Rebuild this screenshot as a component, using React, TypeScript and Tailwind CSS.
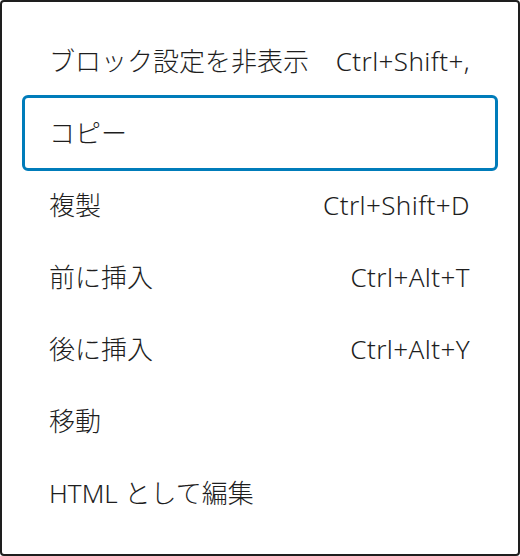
import React from 'react';

type Item = { label: string; shortcut?: string; focused?: boolean };

const items: Item[] = [
  { label: 'ブロック設定を非表示', shortcut: 'Ctrl+Shift+,' },
  { label: 'コピー', focused: true },
  { label: '複製', shortcut: 'Ctrl+Shift+D' },
  { label: '前に挿入', shortcut: 'Ctrl+Alt+T' },
  { label: '後に挿入', shortcut: 'Ctrl+Alt+Y' },
  { label: '移動' },
  { label: 'HTML として編集' },
];

export default function App() {
  return (
    <div
      className="w-[520px] h-[556px] bg-white"
      style={{ fontFamily: '"Noto Sans", "Noto Sans CJK JP", sans-serif' }}
    >
      <div className="h-full border-2 border-[#1e1e1e] rounded-[4px] pt-[23px] pb-[25px] px-[22px] flex flex-col text-[#1e1e1e] font-light">
        {items.map((item) => (
          <div
            key={item.label}
            className={
              item.focused
                ? 'h-[72px] shrink-0 flex items-center justify-between pl-[25px] pr-[26px] rounded-[4px] outline-[3px] outline-solid outline-[#007cba] -outline-offset-1'
                : 'h-[72px] shrink-0 flex items-center justify-between pl-[25px] pr-[26px]'
            }
          >
            <span className="text-[26px] leading-none whitespace-nowrap">{item.label}</span>
            {item.shortcut && (
              <span className="text-[26px] leading-none whitespace-nowrap tracking-[0.4px]">{item.shortcut}</span>
            )}
          </div>
        ))}
      </div>
    </div>
  );
}
